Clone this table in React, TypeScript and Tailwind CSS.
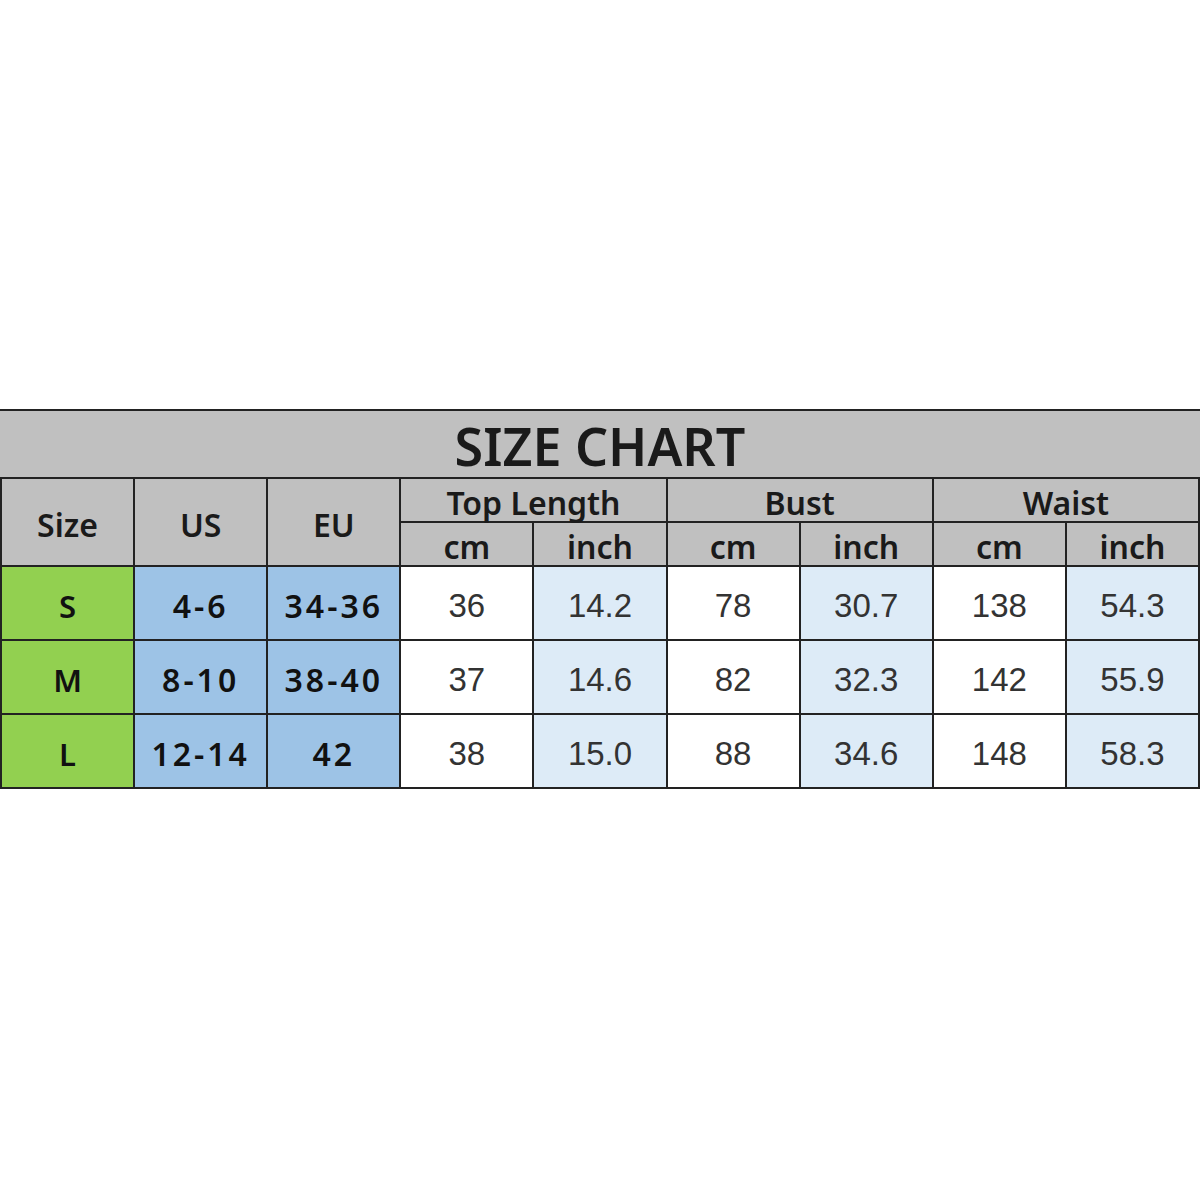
import React from "react";

const head = "font-['Noto_Sans','Open_Sans',sans-serif] font-semibold text-[#1a1a1a]";
const bold = "font-['Noto_Sans','Open_Sans',sans-serif] font-semibold text-[#111]";
const reg = "font-['Liberation_Sans',Arial,sans-serif] text-[#333]";

type Row = { size: string; us: string; eu: string; vals: string[] };
const rows: Row[] = [
  { size: "S", us: "4-6", eu: "34-36", vals: ["36", "14.2", "78", "30.7", "138", "54.3"] },
  { size: "M", us: "8-10", eu: "38-40", vals: ["37", "14.6", "82", "32.3", "142", "55.9"] },
  { size: "L", us: "12-14", eu: "42", vals: ["38", "15.0", "88", "34.6", "148", "58.3"] },
];

function Cell({ className, children }: { className: string; children: React.ReactNode }) {
  return <div className={`flex items-center justify-center ${className}`}>{children}</div>;
}

export default function App() {
  return (
    <div className="w-[1200px] h-[1200px] bg-white">
      <div className="h-[409px]" />
      <div className="border-t-2 border-[#222] bg-[#c0c0c0] h-[68px] flex items-center justify-center">
        <span className={`${head} text-[52px] font-bold pt-[4px]`}>SIZE CHART</span>
      </div>
      <div className="grid grid-cols-9 grid-rows-[42px_42px_72px_72px_72px] gap-[2px] p-[2px] bg-[#222]">
        <Cell className={`row-span-2 bg-[#c0c0c0] ${head} text-[32px] pt-[6px]`}>Size</Cell>
        <Cell className={`row-span-2 bg-[#c0c0c0] ${head} text-[32px] pt-[6px]`}>US</Cell>
        <Cell className={`row-span-2 bg-[#c0c0c0] ${head} text-[32px] pt-[6px]`}>EU</Cell>
        <Cell className={`col-span-2 bg-[#c0c0c0] ${head} text-[32px] pt-[6px]`}>Top Length</Cell>
        <Cell className={`col-span-2 bg-[#c0c0c0] ${head} text-[32px] pt-[6px]`}>Bust</Cell>
        <Cell className={`col-span-2 bg-[#c0c0c0] ${head} text-[32px] pt-[6px]`}>Waist</Cell>
        {["cm", "inch", "cm", "inch", "cm", "inch"].map((t, i) => (
          <Cell key={i} className={`bg-[#c0c0c0] ${head} text-[32px] pt-[6px]`}>{t}</Cell>
        ))}
        {rows.map((r) => (
          <React.Fragment key={r.size}>
            <Cell className={`bg-[#92d050] ${bold} text-[31px] pt-[6px]`}>{r.size}</Cell>
            <Cell className={`bg-[#9dc3e6] ${bold} text-[32px] tracking-[3px] pt-[6px]`}>{r.us}</Cell>
            <Cell className={`bg-[#9dc3e6] ${bold} text-[32px] tracking-[3px] pt-[6px]`}>{r.eu}</Cell>
            {r.vals.map((v, i) => (
              <Cell key={i} className={`${i % 2 === 1 ? "bg-[#ddebf7]" : "bg-white"} ${reg} text-[33px] pt-[6px]`}>{v}</Cell>
            ))}
          </React.Fragment>
        ))}
      </div>
    </div>
  );
}
